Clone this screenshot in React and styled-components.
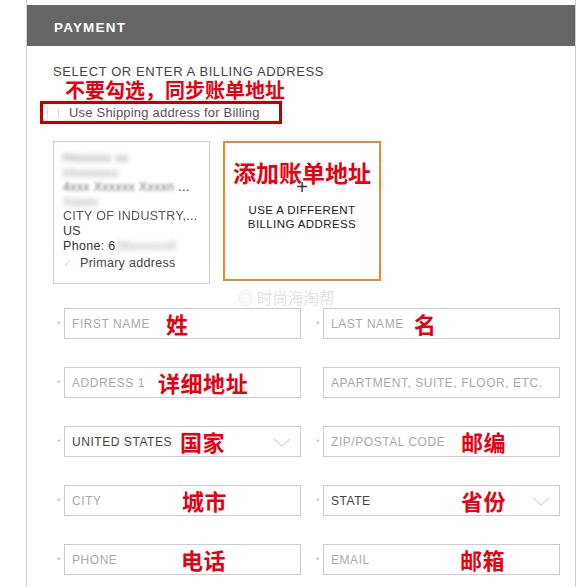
import styled, { createGlobalStyle } from "styled-components"

const Global = createGlobalStyle`
  body {
    margin: 0;
    background: #fff;
    font-family: "Liberation Sans", Arial, sans-serif;
  }
`

const CJK = `"Noto Sans CJK SC", "Noto Sans", sans-serif`

const Panel = styled.main`
  margin-left: 26px;
  width: 548px;
  height: 587px;
  border-left: 1px solid #cfcfcf;
  border-right: 1px solid #cfcfcf;
  overflow: hidden;
`

const Header = styled.header`
  margin-top: 5px;
  height: 41px;
  box-sizing: border-box;
  padding: 3px 0 0 27px;
  background: #666;
  color: #fff;
  display: flex;
  align-items: center;
  font-size: 13.5px;
  font-weight: 700;
  letter-spacing: 1.2px;
`

const Body = styled.section`
  position: relative;
  padding: 19px 0 0 26px;
`

const Title = styled.h2`
  margin: 0;
  font-size: 13px;
  font-weight: 400;
  color: #444;
  letter-spacing: 0.6px;
  line-height: 14px;
`

const Note = styled.div`
  font-family: ${CJK};
  font-weight: 700;
  color: #e60012;
  font-size: ${(p) => p.size || 20}px;
  line-height: 1;
  white-space: nowrap;
`

const Warning = styled(Note)`
  margin: 1px 0 0 12px;
  height: 20px;
`

const RedBox = styled.div`
  margin: 1px 0 0 -13px;
  width: 232px;
  height: 17px;
  border: 3px solid #c00000;
  display: flex;
  align-items: center;
  gap: 10px;
  padding-left: 4px;
  font-size: 13px;
  letter-spacing: 0.2px;
  color: #555;
`

const Check = styled.span`
  width: 10px;
  height: 11px;
  border-left: 1px solid #ddd;
  border-right: 1px solid #ddd;
`

const Cards = styled.div`
  display: flex;
  gap: 13px;
  margin-top: 17px;
`

const AddressCard = styled.div`
  width: 137px;
  height: 128px;
  border: 1px solid #ccc;
  padding: 9px 9px 4px 9px;
  font-size: 12.5px;
  letter-spacing: 0.3px;
  line-height: 14.6px;
  color: #333;
  overflow: hidden;
  white-space: nowrap;
`

const Blur = styled.span`
  display: inline-block;
  filter: blur(${(p) => p.amount || 2}px);
  color: ${(p) => p.color || "#999"};
`

const Line = styled.div`
  height: 14.6px;
`

const Primary = styled.div`
  display: flex;
  align-items: center;
  gap: 6px;
  margin-top: 3px;
  color: #444;
`

const Tick = styled.span`
  width: 11px;
  height: 11px;
  color: #ddd;
  font-size: 11px;
  line-height: 11px;
`

const NewCard = styled.div`
  width: 154px;
  height: 118px;
  border: 2px solid #e98a35;
  display: flex;
  flex-direction: column;
  align-items: center;
  padding-top: 18px;
`

const Plus = styled.div`
  font-size: 20px;
  font-weight: 300;
  line-height: 14px;
  color: #333;
  margin-top: -4px;
`

const NewText = styled.div`
  margin-top: 9px;
  font-size: 11.5px;
  line-height: 14px;
  text-align: center;
  color: #222;
  letter-spacing: 0.4px;
`

const Watermark = styled.div`
  position: absolute;
  left: 211px;
  top: 240px;
  font-family: ${CJK};
  font-size: 15.5px;
  color: #e2e2e2;
  filter: blur(0.6px);
  white-space: nowrap;
`

const Grid = styled.div`
  display: grid;
  grid-template-columns: 244px 244px;
  column-gap: 15px;
  row-gap: 28px;
  margin: 24px 0 0 4px;
`

const FieldWrap = styled.div`
  display: flex;
  align-items: center;
`

const Star = styled.span`
  width: 7px;
  font-size: 9px;
  color: #bbb;
`

const Box = styled.div`
  position: relative;
  flex: 1;
  height: 29px;
  border: 1px solid #ccc;
  display: flex;
  align-items: center;
  padding-left: 7px;
  font-size: 12px;
  letter-spacing: 0.55px;
  color: ${(p) => (p.filled ? "#444" : "#aaa")};
`

const FieldNote = styled(Note)`
  position: absolute;
  top: 3px;
  left: ${(p) => p.at}px;
  font-size: 22px;
`

const Chevron = styled.svg`
  position: absolute;
  right: 9px;
  top: 11px;
`

const Field = ({ star = true, label, filled, note, at, select }) => (
  <FieldWrap>
    <Star>{star ? "*" : ""}</Star>
    <Box filled={filled}>
      {label}
      {note && <FieldNote at={at}>{note}</FieldNote>}
      {select && (
        <Chevron width="18" height="9" viewBox="0 0 18 9">
          <path d="M1 1 L9 8 L17 1" fill="none" stroke="#c8c8c8" strokeWidth="1" />
        </Chevron>
      )}
    </Box>
  </FieldWrap>
)

export default function App() {
  return (
    <>
      <Global />
      <Panel>
        <Header>PAYMENT</Header>
        <Body>
          <Title>SELECT OR ENTER A BILLING ADDRESS</Title>
          <Warning>不要勾选，同步账单地址</Warning>
          <RedBox>
            <Check />
            Use Shipping address for Billing
          </RedBox>
          <Cards>
            <AddressCard>
              <Line><Blur amount={2.5} color="#888">Hxxxxxx xx</Blur></Line>
              <Line><Blur amount={2.5} color="#999">Hxxxxxxx</Blur></Line>
              <Line><Blur amount={1.6} color="#777">4xxx Xxxxxx Xxxxn</Blur> ...</Line>
              <Line><Blur amount={2.5} color="#999">Xxxxx</Blur></Line>
              <Line><Blur amount={0.7} color="#555">CITY OF INDUSTRY,...</Blur></Line>
              <Line>US</Line>
              <Line>Phone: 6<Blur amount={2.5} color="#aaa">26xxxxxx6</Blur></Line>
              <Primary>
                <Tick>✓</Tick>
                Primary address
              </Primary>
            </AddressCard>
            <NewCard>
              <Note size={23}>添加账单地址</Note>
              <Plus>+</Plus>
              <NewText>
                USE A DIFFERENT
                <br />
                BILLING ADDRESS
              </NewText>
            </NewCard>
          </Cards>
          <Watermark>◎ 时尚海淘帮</Watermark>
          <Grid>
            <Field label="FIRST NAME" note="姓" at={101} />
            <Field label="LAST NAME" note="名" at={90} />
            <Field label="ADDRESS 1" note="详细地址" at={93} />
            <Field star={false} label="APARTMENT, SUITE, FLOOR, ETC." />
            <Field label="UNITED STATES" filled note="国家" at={115} select />
            <Field label="ZIP/POSTAL CODE" note="邮编" at={137} />
            <Field label="CITY" note="城市" at={117} />
            <Field label="STATE" filled note="省份" at={137} select />
            <Field label="PHONE" note="电话" at={116} />
            <Field label="EMAIL" note="邮箱" at={136} />
          </Grid>
        </Body>
      </Panel>
    </>
  )
}
